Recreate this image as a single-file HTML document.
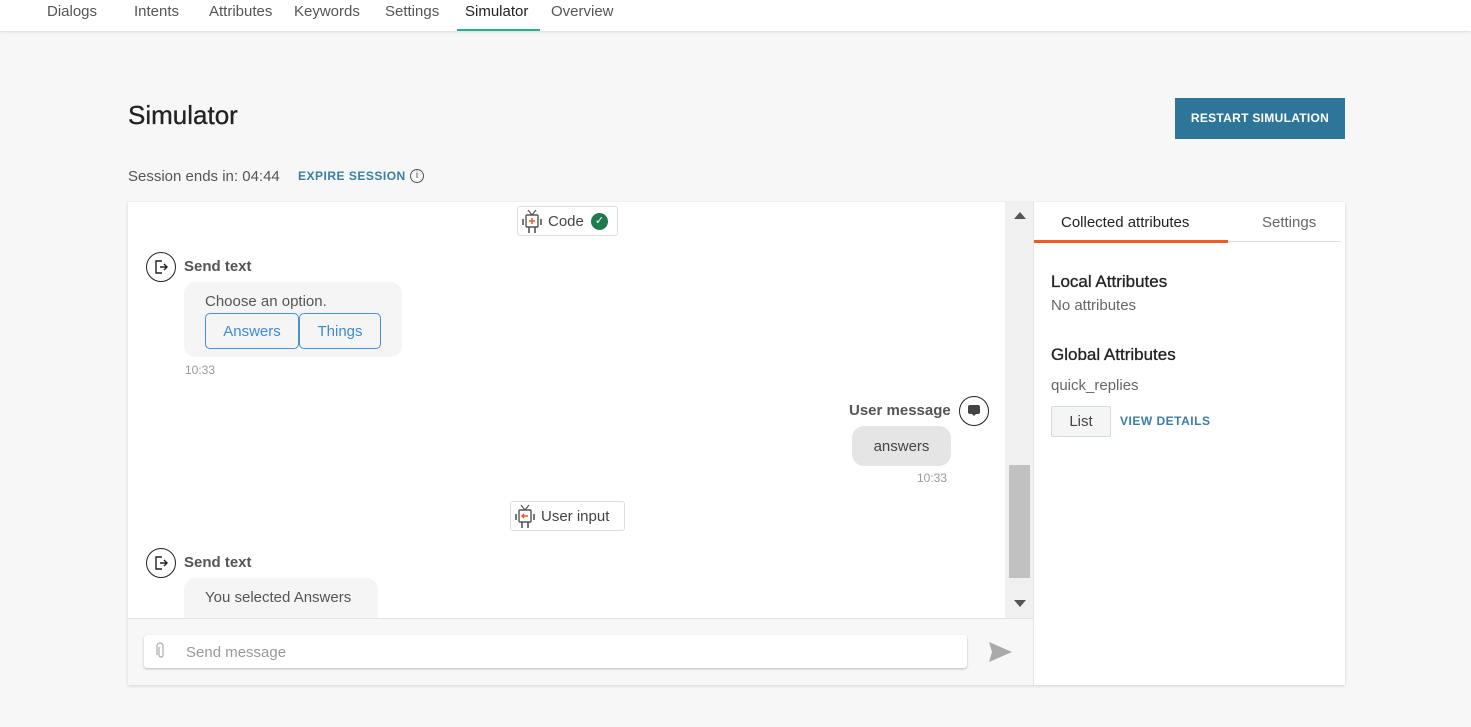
<!DOCTYPE html>
<html><head><meta charset="utf-8"><style>
*{box-sizing:border-box;margin:0;padding:0}
body{width:1471px;height:727px;background:#f7f7f7;font-family:"Liberation Sans",sans-serif;color:#333;position:relative;overflow:hidden}
.a{position:absolute;white-space:nowrap}
.nav{position:absolute;left:0;top:0;width:1471px;height:31px;background:#fff;box-shadow:0 1px 3px rgba(0,0,0,.12)}
.nav span{position:absolute;top:3px;font-size:15px;color:#555}
.bubble{position:absolute;background:#f5f5f5;border-radius:12px}
.btn{position:absolute;border:1px solid #4a90d9;border-radius:5px;color:#3d8ad6;font-size:15px;text-align:center;line-height:34px;height:36px}
.circ{position:absolute;width:30px;height:30px;border:1.5px solid #222;border-radius:50%}
.chip{position:absolute;background:#fff;border:1px solid #ddd;border-radius:3px;height:30px;font-size:15px;color:#444}
</style></head><body>
<div class="nav">
<span style="left:47px">Dialogs</span><span style="left:134px">Intents</span><span style="left:209px">Attributes</span><span style="left:294px">Keywords</span><span style="left:385px">Settings</span><span style="left:465px;color:#222">Simulator</span><span style="left:551px">Overview</span>
<div style="position:absolute;left:457px;top:29px;width:83px;height:2px;background:#26b08f"></div>
</div>
<div class="a" style="left:128px;top:100px;font-size:26px;color:#222;-webkit-text-stroke:.3px #222">Simulator</div>
<div class="a" style="left:1175px;top:98px;width:170px;height:41px;background:#2e7699;color:#fff;font-size:12px;font-weight:bold;text-align:center;line-height:40px;letter-spacing:.3px">RESTART SIMULATION</div>
<div class="a" style="left:128px;top:168px;font-size:15px;color:#555">Session ends in: 04:44</div>
<div class="a" style="left:298px;top:169px;font-size:12px;font-weight:bold;color:#3a7fa3;letter-spacing:.5px">EXPIRE SESSION</div>
<div class="a" style="left:410px;top:169px;width:14px;height:14px;border:1.3px solid #555;border-radius:50%;font-size:10px;text-align:center;line-height:12px;color:#555">i</div>

<div class="a" style="left:128px;top:202px;width:1217px;height:483px;background:#fff;box-shadow:0 1px 3px rgba(0,0,0,.15)"></div>
<div class="a" style="left:1005px;top:202px;width:28px;height:417px;background:#f0f0f0"></div>
<div class="a" style="left:1009px;top:465px;width:21px;height:113px;background:#c1c1c1"></div>
<div class="a" style="left:1014px;top:212px;width:0;height:0;border-left:6px solid transparent;border-right:6px solid transparent;border-bottom:7px solid #555"></div>
<div class="a" style="left:1014px;top:600px;width:0;height:0;border-left:6px solid transparent;border-right:6px solid transparent;border-top:7px solid #555"></div>
<div class="a" style="left:128px;top:618px;width:905px;height:67px;background:#f7f7f7;border-top:1px solid #e3e3e3"></div>
<div class="a" style="left:1033px;top:202px;width:1px;height:483px;background:#e6e6e6"></div>

<div class="chip" style="left:517px;top:206px;width:101px">
<svg class="a" style="left:4px;top:2px" width="20" height="26" viewBox="0 0 20 26"><path d="M6 1l4 5 4-5" stroke="#555" fill="none" stroke-width="1.2"/><rect x="4" y="6" width="12" height="12" rx="1" fill="#fff" stroke="#555" stroke-width="1.4"/><path d="M10 9v6M7 12h6" stroke="#f15a22" stroke-width="1.5"/><path d="M1 10v6M19 10v6M7 18v6M13 18v6" stroke="#555" stroke-width="1.6"/></svg>
<span class="a" style="left:30px;top:6px">Code</span><span class="a" style="left:73px;top:6px;width:17px;height:17px;border-radius:50%;background:#1f7a4f;color:#fff;font-size:11px;text-align:center;line-height:17px">✓</span></div>

<div class="circ" style="left:146px;top:252px"><svg class="a" style="left:6px;top:6px" width="16" height="16"><path d="M9 2H3v12h6M7 8h7M11 5l3 3-3 3" fill="none" stroke="#222" stroke-width="1.4"/></svg></div>
<div class="a" style="left:184px;top:258px;font-size:15px;font-weight:bold;color:#555">Send text</div>
<div class="bubble" style="left:184px;top:282px;width:218px;height:75px"></div>
<div class="a" style="left:205px;top:293px;font-size:15px;color:#555">Choose an option.</div>
<div class="btn" style="left:205px;top:313px;width:94px;line-height:36px">Answers</div>
<div class="btn" style="left:299px;top:313px;width:82px;line-height:36px">Things</div>
<div class="a" style="left:185px;top:363px;font-size:12px;color:#999">10:33</div>

<div class="a" style="left:849px;top:402px;font-size:15px;font-weight:bold;color:#555">User message</div>
<div class="circ" style="left:959px;top:396px"><div class="a" style="left:8px;top:8px;width:12px;height:9px;background:#444;border-radius:2px"></div><div class="a" style="left:11px;top:16px;width:0;height:0;border-left:3px solid transparent;border-right:3px solid transparent;border-top:3px solid #444"></div></div>
<div class="a" style="left:852px;top:426px;width:99px;height:40px;background:#e5e5e5;border-radius:12px;font-size:15px;color:#444;text-align:center;line-height:42px">answers</div>
<div class="a" style="left:917px;top:471px;font-size:12px;color:#999">10:33</div>

<div class="chip" style="left:510px;top:501px;width:115px">
<svg class="a" style="left:4px;top:2px" width="20" height="26" viewBox="0 0 20 26"><path d="M6 1l4 5 4-5" stroke="#555" fill="none" stroke-width="1.2"/><rect x="4" y="6" width="12" height="12" rx="1" fill="#fff" stroke="#555" stroke-width="1.4"/><path d="M13 12H7M9 10l-2 2 2 2" stroke="#f15a22" fill="none" stroke-width="1.4"/><path d="M1 10v6M19 10v6M7 18v6M13 18v6" stroke="#555" stroke-width="1.6"/></svg>
<span class="a" style="left:30px;top:6px">User input</span></div>

<div class="circ" style="left:146px;top:548px"><svg class="a" style="left:6px;top:6px" width="16" height="16"><path d="M9 2H3v12h6M7 8h7M11 5l3 3-3 3" fill="none" stroke="#222" stroke-width="1.4"/></svg></div>
<div class="a" style="left:184px;top:554px;font-size:15px;font-weight:bold;color:#555">Send text</div>
<div class="bubble" style="left:184px;top:578px;width:194px;height:40px;border-radius:12px 12px 0 0"></div>
<div class="a" style="left:205px;top:589px;font-size:15px;color:#555">You selected Answers</div>

<div class="a" style="left:144px;top:635px;width:823px;height:33px;background:#fff;border-radius:3px;box-shadow:0 1px 2px rgba(0,0,0,.25)"></div>
<svg class="a" style="left:156px;top:642px" width="10" height="18"><path d="M3 5v8a2 2 0 0 0 4 0V4a3 3 0 0 0-6 0v9" fill="none" stroke="#aaa" stroke-width="1.2"/></svg>
<div class="a" style="left:186px;top:644px;font-size:15px;color:#999">Send message</div>
<svg class="a" style="left:988px;top:640px" width="26" height="24"><path d="M1 2 L24 12 L1 22 L4 12Z" fill="#aaa"/></svg>

<div class="a" style="left:1061px;top:214px;font-size:15px;color:#222">Collected attributes</div>
<div class="a" style="left:1262px;top:214px;font-size:15px;color:#666">Settings</div>
<div class="a" style="left:1034px;top:241px;width:307px;height:1px;background:#ddd"></div>
<div class="a" style="left:1034px;top:240px;width:194px;height:3px;background:#f15a22"></div>
<div class="a" style="left:1051px;top:272px;font-size:17px;color:#222;-webkit-text-stroke:.3px #222">Local Attributes</div>
<div class="a" style="left:1051px;top:297px;font-size:15px;color:#666">No attributes</div>
<div class="a" style="left:1051px;top:345px;font-size:17px;color:#222;-webkit-text-stroke:.3px #222">Global Attributes</div>
<div class="a" style="left:1051px;top:377px;font-size:15px;color:#666">quick_replies</div>
<div class="a" style="left:1051px;top:406px;width:60px;height:31px;background:#f5f5f5;border:1px solid #cfdde6;border-radius:2px;font-size:15px;color:#444;text-align:center;line-height:29px">List</div>
<div class="a" style="left:1120px;top:414px;font-size:12px;font-weight:bold;color:#3a7fa3;letter-spacing:.5px">VIEW DETAILS</div>
</body></html>
